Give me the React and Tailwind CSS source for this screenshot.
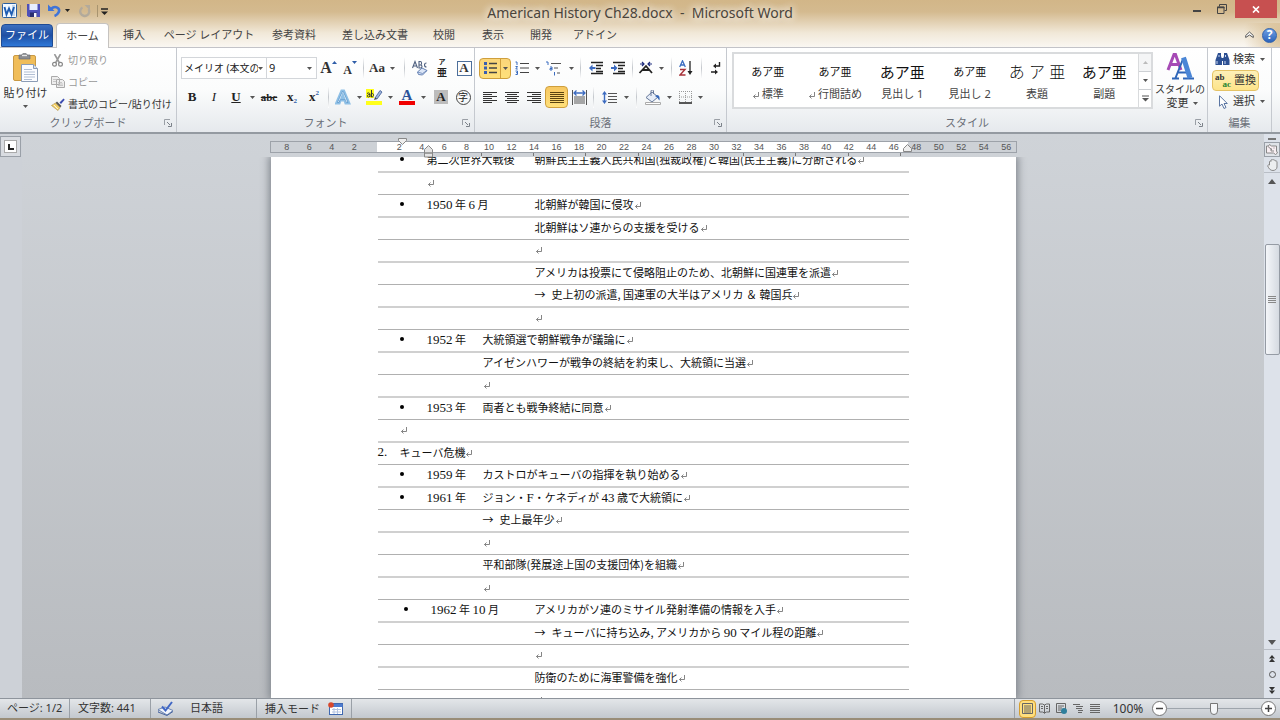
import React from 'react';
import clsx from 'clsx';

const tabs = [
  { name: '挿入', width: 'w-[50px]' },
  { name: 'ページ レイアウト', width: 'w-[100px]' },
  { name: '参考資料', width: 'w-[70px]' },
  { name: '差し込み文書', width: 'w-[92px]' },
  { name: '校閲', width: 'w-[46px]' },
  { name: '表示', width: 'w-[52px]' },
  { name: '開発', width: 'w-[44px]' },
  { name: 'アドイン', width: 'w-16' },
];

const styles = [
  { sample: 'あア亜', name: '標準', mark: true, size: 'text-[11px]' },
  { sample: 'あア亜', name: '行間詰め', mark: true, size: 'text-[11px]' },
  { sample: 'あア亜', name: '見出し 1', size: 'text-[15px]' },
  { sample: 'あア亜', name: '見出し 2', size: 'text-[11px]' },
  { sample: 'あ ア 亜', name: '表題', size: 'text-base font-light' },
  { sample: 'あア亜', name: '副題', size: 'text-[15px]' },
];

const rulerMarks = [8, 6, 4, 2, '', ...Array.from({ length: 28 }, (_, i) => (i + 1) * 2)];

// indent: where the body text starts ("label" = right after the bullet)
const lines = [
  { bullet: true, label: '第二次世界大戦後', indent: 'far', text: '朝鮮民主主義人民共和国(独裁政権)と韓国(民主主義)に分断される' },
  { indent: 'label' },
  { bullet: true, label: '1950 年 6 月', indent: 'far', text: '北朝鮮が韓国に侵攻' },
  { indent: 'far', text: '北朝鮮はソ連からの支援を受ける' },
  { indent: 'far' },
  { indent: 'far', text: 'アメリカは投票にて侵略阻止のため、北朝鮮に国連軍を派遣' },
  { indent: 'far', arrow: true, text: '史上初の派遣, 国連軍の大半はアメリカ ＆ 韓国兵' },
  { indent: 'far' },
  { bullet: true, label: '1952 年', indent: 'near', text: '大統領選で朝鮮戦争が議論に' },
  { indent: 'near', text: 'アイゼンハワーが戦争の終結を約束し、大統領に当選' },
  { indent: 'near' },
  { bullet: true, label: '1953 年', indent: 'near', text: '両者とも戦争終結に同意' },
  { indent: 'number' },
  { number: '2.', indent: 'number', text: 'キューバ危機' },
  { bullet: true, label: '1959 年', indent: 'near', text: 'カストロがキューバの指揮を執り始める' },
  { bullet: true, label: '1961 年', indent: 'near', text: 'ジョン・F・ケネディが 43 歳で大統領に' },
  { indent: 'near', arrow: true, text: '史上最年少' },
  { indent: 'near' },
  { indent: 'near', text: '平和部隊(発展途上国の支援団体)を組織' },
  { indent: 'near' },
  { bullet: true, wide: true, label: '1962 年 10 月', indent: 'far', text: 'アメリカがソ連のミサイル発射準備の情報を入手' },
  { indent: 'far', arrow: true, text: 'キューバに持ち込み, アメリカから 90 マイル程の距離' },
  { indent: 'far' },
  { indent: 'far', text: '防衛のために海軍警備を強化' },
  { indent: 'far' },
];

const indentWidth = {
  number: 'w-[22px]',
  label: 'w-[49px]',
  near: 'w-[105px]',
  far: 'w-[157px]',
};

const Svg = ({ w, h, children, className }) => (
  <svg width={w} height={h} viewBox={`0 0 ${w} ${h}`} fill="none" className={clsx('shrink-0', className)} aria-hidden="true">
    {children}
  </svg>
);

const Caret = ({ color = '#555' }) => (
  <Svg w={5} h={3}>
    <path d="M0 0h5L2.500 3z" fill={color} />
  </Svg>
);

const Tool = ({ label, className = 'w-[22px]', children }) => (
  <button type="button" aria-label={label} className={clsx('flex h-[22px] shrink-0 items-center justify-center', className)}>
    {children}
  </button>
);

const Drop = ({ className = 'w-2' }) => (
  <Tool label="その他のオプション" className={className}>
    <Caret />
  </Tool>
);

const Sep = ({ className = 'w-1.5' }) => (
  <span className={clsx('flex h-[22px] shrink-0 justify-center', className)}>
    <span className="w-px bg-[linear-gradient(#fff,#c3c7cc,#fff)]" />
  </span>
);

const Launcher = () => (
  <button type="button" aria-label="ダイアログを表示" className="absolute right-1 top-1">
    <Svg w={8} h={8}>
      <path d="M.5 6V.5H6" stroke="#9a9fa6" />
      <path d="M3 3l3 3M7.500 4v3.500H4" stroke="#7c828a" />
    </Svg>
  </button>
);

const Group = ({ title, className, launcher = true, children }) => (
  <section className={clsx('flex shrink-0 flex-col border-r border-[#c5c9cf]', className)}>
    <div className="h-[67px]">{children}</div>
    <div className="relative h-[17px] text-center text-[11px] leading-4 text-[#6a6f78]">
      {title}
      {launcher && <Launcher />}
    </div>
  </section>
);

const ReturnMark = ({ className }) => (
  <Svg w={7} h={8} className={className}>
    <path d="M6.500 0v4.500H1.500M3.500 2.500l-2 2 2 2" stroke="#777" strokeWidth=".9" />
  </Svg>
);

const TitleBar = () => (
  <div className="grid h-[23px] grid-cols-[1fr_auto_1fr]">
    <div className="flex items-start pt-[3px] pl-0.5">
      <Svg w={15} h={15}>
        <rect x=".5" y=".5" width="14" height="14" rx="1" fill="#f4f9ff" stroke="#2c5f9e" />
        <path d="M10 2h3v11h-3z" fill="#c6d9ee" />
        <path d="M2.500 4l2 7.500L7 5.500l2.500 6L12 4" stroke="#1f5db3" strokeWidth="1.900" />
      </Svg>
      <span className="ml-[3px] mt-0.5 h-3 w-px bg-[#a8946f]" />
      <button type="button" aria-label="上書き保存" className="ml-1.5 mt-px">
        <Svg w={13} h={13}>
          <path d="M0 0h13v13H1.500L0 11.500z" fill="#4d50b8" />
          <path d="M2.500 0h8v6h-8z" fill="#e8efff" />
          <path d="M3 8.500h7V13H3z" fill="#2b2f70" />
          <path d="M7 9h2.500v4H7z" fill="#f4f4ff" />
        </Svg>
      </button>
      <button type="button" aria-label="元に戻す" className="ml-2">
        <Svg w={13} h={14}>
          <path d="M3 6C7 2 13 5 10.500 9.500 9.500 11.500 8 12.500 6.500 13" stroke="#3f74d8" strokeWidth="2.600" />
          <path d="M0 1.500V8h6.500z" fill="#3f74d8" />
        </Svg>
      </button>
      <span className="mx-1 mt-1.5"><Caret color="#222" /></span>
      <button type="button" aria-label="やり直し" className="ml-[5px] mt-0.5">
        <Svg w={12} h={13}>
          <path d="M3.500 2.500A4.500 4.500 0 1 0 9.500 4" stroke="#b3aa9b" strokeWidth="2.400" />
          <path d="M5.500 0H11v5.500z" fill="#b3aa9b" />
        </Svg>
      </button>
      <span className="ml-1.5 mt-0.5 h-3 w-px bg-[#a8946f]" />
      <button type="button" aria-label="クイック アクセスのカスタマイズ" className="ml-[3px] mt-[5px]">
        <Svg w={7} h={7}>
          <path d="M0 1h7" stroke="#222" strokeWidth="1.500" />
          <path d="M0 3.500h7L3.500 7z" fill="#222" />
        </Svg>
      </button>
    </div>
    <h1 className="pt-[3px] text-sm text-[#4a443b] [text-shadow:0_0_8px_#fff,0_0_8px_#fff]">
      American History Ch28.docx&nbsp; -&nbsp; Microsoft Word
    </h1>
    <div className="flex items-start justify-end pr-[3px]">
      <button type="button" aria-label="最小化" className="mr-4 mt-2.5 h-0.5 w-2 bg-[#444]" />
      <button type="button" aria-label="元のサイズに戻す" className="mr-2 mt-1">
        <Svg w={10} h={10}>
          <path d="M2.500 2.500v-2h7v6h-2" stroke="#444" />
          <path d="M.5 3h6.500v6.500H.5z" stroke="#444" />
          <path d="M0 3.500h7.500" stroke="#444" strokeWidth="1.500" />
        </Svg>
      </button>
      <button type="button" aria-label="閉じる" className="flex h-[18px] w-[42px] items-center justify-center bg-[#c75050]">
        <Svg w={8} h={7}>
          <path d="M1 .5l6 6M7 .5l-6 6" stroke="#fff" strokeWidth="1.700" />
        </Svg>
      </button>
    </div>
  </div>
);

const TabBar = () => (
  <nav className="flex h-6 items-stretch pl-px text-[11px] text-[#444]">
    <button type="button" className="mt-px w-[52px] rounded-t-sm border border-[#1f4b94] bg-[linear-gradient(#3c6fc0,#1f4fa3_50%,#2f78d8)] text-white">
      ファイル
    </button>
    <button type="button" className="relative ml-[3px] -mb-px w-[53px] rounded-t-sm border border-b-0 border-[#c6c3c0] bg-white">
      ホーム
    </button>
    {tabs.map((tab) => (
      <button key={tab.name} type="button" className={clsx('shrink-0 whitespace-nowrap', tab.width)}>
        {tab.name}
      </button>
    ))}
    <div className="ml-auto flex items-center gap-2 bg-[radial-gradient(circle_at_100%_50%,#d8bf95,transparent_70%)] pr-[3px] pl-4">
      <button type="button" aria-label="リボンの最小化">
        <Svg w={9} h={8}>
          <path d="M.7 4.500l3.800-3.500 3.800 3.500v2L4.500 4 .7 6.500z" fill="#fff" stroke="#555" />
        </Svg>
      </button>
      <button type="button" aria-label="ヘルプ" className="flex size-[15px] items-center justify-center rounded-full border border-[#2f62ad] bg-[linear-gradient(#6fa0e4,#2c63bb)] text-[12px] leading-3 font-bold text-white">
        ?
      </button>
    </div>
  </nav>
);

const Clipboard = () => (
  <Group title="クリップボード" className="w-[177px]">
    <div className="flex">
      <button type="button" className="flex w-[51px] shrink-0 flex-col items-center pt-[5px] text-[11px] leading-4 text-[#333]">
        <Svg w={26} h={29}>
          <rect x=".5" y="2.500" width="22" height="25" rx="1.500" fill="#f0bd59" stroke="#c99a45" />
          <path d="M6 2h3c0-2.500 5-2.500 5 0h3v4H6z" fill="#8b8d91" stroke="#6c6e73" strokeWidth=".7" />
          <path d="M9 2.500h5" stroke="#e6e6e6" strokeWidth="1.300" />
          <path d="M8.500 11.500h12l4 4v13h-16z" fill="#fbfcff" stroke="#8b9cb5" />
          <path d="M20.500 11.500v4h4" fill="#dbe3ef" stroke="#8b9cb5" />
          <path d="M11 16.500h8M11 19h11M11 21.500h11M11 24h11M11 26.500h8" stroke="#b1bfd4" />
        </Svg>
        <span className="mt-[3px] whitespace-nowrap">貼り付け</span>
        <span className="mt-1"><Caret /></span>
      </button>
      <div className="flex flex-col pt-px text-[10px] whitespace-nowrap">
        <button type="button" className="flex h-[22px] items-center text-[#999]">
          <Svg w={13} h={13} className="mr-1">
            <path d="M3.500 0L8.500 9M9.500 0L4.500 9" stroke="#999" strokeWidth="1.600" />
            <circle cx="3.500" cy="10.200" r="1.900" stroke="#888" strokeWidth="1.200" />
            <circle cx="9.500" cy="10.200" r="1.900" stroke="#888" strokeWidth="1.200" />
          </Svg>
          切り取り
        </button>
        <button type="button" className="flex h-[22px] items-center text-[#999]">
          <Svg w={14} h={12} className="mr-[3px]">
            <path d="M.5.5h6l2 2v6h-8zM5.500 3.500h6l2 2v6h-8z" fill="#eee" stroke="#aaa" />
            <path d="M7 6.500h4M7 8h5M7 9.500h5M2 3.500h3M2 5.500h3" stroke="#bbb" strokeWidth=".8" />
          </Svg>
          コピー
        </button>
        <button type="button" className="flex h-[22px] items-center text-[#333]">
          <Svg w={14} h={13} className="mr-[3px]">
            <path d="M8.500 4.500l4-4 1.200 1.200-3.700 4.300z" fill="#3b4bb0" />
            <path d="M6 3.500l4.500 4.500-1.500 1.500L4.500 5z" fill="#555" />
            <path d="M4.500 5L9 9.500l-2 3L.500 7.500z" fill="#f2cf62" stroke="#a98a3a" strokeWidth=".6" />
            <path d="M2.500 6.700l4.500 4.500" stroke="#fff" strokeWidth=".9" />
          </Svg>
          書式のコピー/貼り付け
        </button>
      </div>
    </div>
  </Group>
);

const serif = "font-['Liberation_Serif',serif]";

const FontGroup = () => (
  <Group title="フォント" className="w-[298px]">
    <div className="flex flex-col gap-[7px] pt-[9px] pl-1">
      <div className="flex items-center">
        <label className="relative flex h-[22px] w-[86px] items-center border border-[#d3d6da] bg-white">
          <select aria-label="フォント" className="h-5 w-[76px] appearance-none overflow-hidden pl-0.5 text-[10px] leading-5 text-[#222]">
            <option>メイリオ (本文の</option>
          </select>
          <Caret />
        </label>
        <label className="-ml-px flex h-[22px] w-[51px] items-center border border-[#d3d6da] bg-white">
          <select aria-label="フォント サイズ" className="h-5 w-10 appearance-none pl-0.5 text-[11px] leading-5 text-[#222]">
            <option>9</option>
          </select>
          <Caret />
        </label>
        <Tool label="フォントの拡大" className="w-[23px]">
          <span className={clsx(serif, 'text-[16px] leading-5 font-bold text-[#333]')}>A</span>
          <Svg w={5} h={3} className="mb-3"><path d="M0 3h5L2.500 0z" fill="#2e5da8" /></Svg>
        </Tool>
        <Tool label="フォントの縮小" className="w-5">
          <span className={clsx(serif, 'mt-1 text-[12px] leading-4 font-bold text-[#333]')}>A</span>
          <Svg w={5} h={3} className="mb-3"><path d="M0 0h5L2.500 3z" fill="#2e5da8" /></Svg>
        </Tool>
        <Sep />
        <Tool label="文字種の変換" className="w-[22px]">
          <span className={clsx(serif, 'text-[13px] font-bold text-[#333]')}>Aa</span>
        </Tool>
        <Drop />
        <Sep className="w-4" />
        <Tool label="書式のクリア" className="w-4">
          <Svg w={16} h={16}>
            <path d="M.5 8L3 1.500 5.500 8M1.500 6h3M7 1.500V8h1.500c2 0 2-3 0-3H7h1.300c1.700 0 1.700-3.500 0-3.500zM14.500 3a2 2 0 1 0 0 4" stroke="#4f6080" strokeWidth="1.100" />
            <path d="M5.500 12l4.500-4 5 2.500-4.500 4.500-4-.5z" fill="#dce6f7" stroke="#6582b4" />
            <path d="M5.500 12l5 1.500L15 10.500" stroke="#6582b4" strokeWidth=".8" />
          </Svg>
        </Tool>
        <Tool label="ルビ" className="w-7 flex-col text-[#222]">
          <span className="text-[7px] leading-[9px] font-bold">ア</span>
          <span className="text-[10px] leading-[13px] font-bold">亜</span>
        </Tool>
        <Tool label="囲み線" className="w-4">
          <span className={clsx(serif, 'flex size-[15px] items-center justify-center border border-[#4d6f9b] text-[13px] leading-3 font-bold text-[#333]')}>A</span>
        </Tool>
      </div>
      <div className={clsx(serif, 'flex items-center text-[13px] text-[#222]')}>
        <Tool label="太字"><b>B</b></Tool>
        <Tool label="斜体"><i>I</i></Tool>
        <Tool label="下線"><b className="font-bold underline">U</b></Tool>
        <Drop className="w-2.5" />
        <Tool label="取り消し線" className="w-6"><s className="text-[11px] font-bold">abc</s></Tool>
        <Tool label="下付き"><b>x</b><b className="mt-2 text-[7px] text-[#2e5da8]">2</b></Tool>
        <Tool label="上付き"><b>x</b><b className="mb-2 text-[7px] text-[#2e5da8]">2</b></Tool>
        <Sep />
        <Tool label="文字の効果" className="w-6">
          <Svg w={16} h={16}>
            <path d="M1 14.500L6.500 1.500h2.500L14.500 14.500h-4L9.500 11.500h-4L4.500 14.500zM6.500 9h2.500L7.800 5.500z" fill="#fff" stroke="#8fc0e6" strokeWidth="2" />
            <path d="M2.500 13.500L7.300 2.500h1L13 13.500h-1.500L10.300 10.500h-5L4 13.500z" stroke="#4f8fc8" strokeWidth=".7" />
          </Svg>
        </Tool>
        <Drop />
        <Tool label="蛍光ペンの色">
          <Svg w={17} h={16}>
            <path d="M0 0h8v9H0zM0 12h16v4H0z" fill="#ffff1a" />
            <path d="M1 4.500c2-1.500 3 0 3 1V8M4 5.500c-3-.3-3.500 2.500-1.500 2.500L4 7M5.500 1v7M5.500 5c2-2 3.500 3 0 3" stroke="#333" />
            <path d="M9 9l5-7.500 2 1.500-5 7z" fill="#9fb6dc" stroke="#3d5b96" strokeWidth=".8" />
            <path d="M8 11l1-2.500 2 1.500z" fill="#444" />
          </Svg>
        </Tool>
        <Drop className="w-2.5" />
        <Tool label="フォントの色" className="w-6 flex-col">
          <b className="text-[15px] leading-3 text-[#2a5299]">A</b>
          <span className="h-1 w-4 bg-[#f00000]" />
        </Tool>
        <Drop />
        <Tool label="文字の網かけ" className="w-7">
          <b className="flex size-[14px] items-center justify-center bg-[#bcbcbc]">A</b>
        </Tool>
        <Tool label="囲い文字" className="w-4">
          <span className="flex size-[15px] items-center justify-center rounded-full border border-[#444] font-['Noto_Sans_CJK_JP',sans-serif] text-[10px] leading-3">字</span>
        </Tool>
      </div>
    </div>
  </Group>
);

const AlignIcon = ({ d, color = '#333' }) => (
  <Svg w={14} h={13}>
    <path d={d} stroke={color} />
  </Svg>
);

const IndentIcon = ({ flip }) => (
  <Svg w={15} h={14}>
    <path d="M2 1.500h12M7 4.500h7M7 7.500h5M7 10.500h7M2 12.500h12" stroke="#222" strokeWidth="1.300" />
    <path d={flip ? 'M0 6h3V3.500L6.500 7 3 10.500V8H0z' : 'M6.500 6h-3V3.500L0 7l3.500 3.500V8h3z'} fill="#3c6bc0" />
  </Svg>
);

const Paragraph = () => (
  <Group title="段落" className="w-[252px]">
    <div className="flex flex-col gap-[7px] pt-[9px] pl-1">
      <div className="flex items-center">
        <div className="flex h-[21px] w-8 rounded-sm border border-[#cf9f3c] bg-[linear-gradient(#fbd67a,#ffe07a)]">
          <button type="button" aria-label="箇条書き" className="flex w-5 items-center justify-center">
            <Svg w={13} h={12}>
              <path d="M5 1.500h8M5 6h8M5 10.500h8" stroke="#444" strokeWidth="1.300" />
              <path d="M0 0h3v3H0zM0 4.500h3v3H0zM0 9h3v3H0z" fill="#3a5fb0" />
            </Svg>
          </button>
          <button type="button" aria-label="箇条書きのオプション" className="flex flex-1 items-center justify-center border-l border-[#cf9f3c]">
            <Caret />
          </button>
        </div>
        <Tool label="段落番号" className="w-[22px]">
          <Svg w={14} h={14}>
            <path d="M5 2.500h9M5 7h9M5 11.500h9" stroke="#444" strokeWidth="1.200" />
            <path d="M.5 1H2v3M.5 5.500H2.500L.8 8h2M.5 10h2v3.500h-2M1 11.700h1.500" stroke="#3a6cc0" />
          </Svg>
        </Tool>
        <Drop />
        <Tool label="アウトライン" className="w-[26px]">
          <Svg w={16} h={15}>
            <path d="M5 2.500h10M8 7h4M11 12h3" stroke="#555" strokeWidth="1.200" />
            <path d="M0 1h2v3M4 6h2v3H4V7.500h2M8.500 11v3.500" stroke="#3a6cc0" />
          </Svg>
        </Tool>
        <Drop />
        <Sep className="w-2.5" />
        <Tool label="インデントを減らす"><IndentIcon /></Tool>
        <Tool label="インデントを増やす"><IndentIcon flip /></Tool>
        <Sep />
        <Tool label="拡張書式" className="w-[22px]">
          <Svg w={16} h={14}>
            <path d="M1.500 12L8 5l6 7M4.500 9h7" stroke="#222" strokeWidth="1.800" />
            <path d="M2 3h3.500M4 1l2 2-2 2M14 3h-3.500M12 1l-2 2 2 2" stroke="#1c2a7c" strokeWidth="1.200" />
          </Svg>
        </Tool>
        <Drop />
        <Sep className="w-3" />
        <Tool label="並べ替え" className="w-[18px]">
          <Svg w={14} h={16}>
            <path d="M.7 7L3.500.8 6.300 7M1.800 5h3.500" stroke="#3a6cc0" strokeWidth="1.300" />
            <path d="M1 9.500h5L1 15h5.500" stroke="#a8323a" strokeWidth="1.400" />
            <path d="M11 1v12" stroke="#222" strokeWidth="1.300" />
            <path d="M8.500 11h5L11 15z" fill="#222" />
          </Svg>
        </Tool>
        <Sep className="w-3" />
        <Tool label="編集記号の表示" className="w-[18px]">
          <Svg w={10} h={13}>
            <path d="M8.500 0v4H4M0 10h5" stroke="#222" strokeWidth="1.400" />
            <path d="M5 1.500v5L2 4zM4 7.500v5l3-2.500z" fill="#222" />
          </Svg>
        </Tool>
      </div>
      <div className="flex items-center">
        <Tool label="左揃え"><AlignIcon d="M0 1.500h14M0 3.500h9M0 5.500h14M0 7.500h9M0 9.500h14M0 11.500h9" /></Tool>
        <Tool label="中央揃え"><AlignIcon d="M0 1.500h14M2 3.500h10M0 5.500h14M2 7.500h10M0 9.500h14M2 11.500h10" /></Tool>
        <Tool label="右揃え"><AlignIcon d="M0 1.500h14M5 3.500h9M0 5.500h14M5 7.500h9M0 9.500h14M5 11.500h9" /></Tool>
        <Tool label="両端揃え" className="w-[23px] rounded-sm border border-[#cf9f3c] bg-[linear-gradient(#f7c862,#ffe07a)]">
          <AlignIcon d="M0 1.500h14M0 3.500h14M0 5.500h14M0 7.500h14M0 9.500h14M0 11.500h14" color="#5a4410" />
        </Tool>
        <Tool label="均等割り付け">
          <Svg w={15} h={15}>
            <path d="M.5 0v15M14.500 0v15M2 7h11M2 9h11M2 11h11M2 13h11" stroke="#555" />
            <path d="M2 3h11M4.500.5L2 3l2.500 2.500M10.500.5L13 3l-2.500 2.500" stroke="#3c6bc0" strokeWidth="1.300" />
          </Svg>
        </Tool>
        <Sep />
        <Tool label="行間" className="w-[26px]">
          <Svg w={15} h={15}>
            <path d="M6 3.500h9M6 6.500h9M6 9.500h9M6 12.500h9" stroke="#555" strokeWidth="1.200" />
            <path d="M0 4.500L2.500 1 5 4.500H3.200v6H5L2.500 14 0 10.500h1.800v-6z" fill="#3c6bc0" />
          </Svg>
        </Tool>
        <Drop />
        <Sep className="w-3" />
        <Tool label="塗りつぶし">
          <Svg w={16} h={15}>
            <path d="M1 7.500L7 2l6 5-6 5z" fill="#e6edf8" stroke="#66789a" />
            <path d="M6 6V1c0-1.500 2.500-1.500 2.500 0v3" stroke="#66789a" />
            <path d="M12 5c2.500 0 3 3 2.500 5.500C13 9 13 7.500 10 6z" fill="#3667b8" />
            <path d="M.5 12.500h15v2H.5z" fill="#fff" stroke="#aaa" />
          </Svg>
        </Tool>
        <Drop className="w-2.5" />
        <Tool label="罫線">
          <Svg w={13} h={13}>
            <path d="M.5 0v11M12.500 0v11M6.500 0v11M0 .5h13M0 6h13" stroke="#999" strokeDasharray="1 1" />
            <path d="M0 12h13" stroke="#222" strokeWidth="1.500" />
          </Svg>
        </Tool>
        <Drop />
      </div>
    </div>
  </Group>
);

const Styles = () => (
  <Group title="スタイル" className="min-w-0 flex-1">
    <div className="flex">
      <div className="mt-1 ml-[5px] flex h-[57px] min-w-0 flex-1 border-2 border-[#d9dbdd] bg-white">
        <div className="grid min-w-0 flex-1 grid-cols-6">
          {styles.map((style) => (
            <button key={style.name} type="button" className="flex min-w-0 flex-col items-center overflow-hidden">
              <span className={clsx('mt-1 h-7 leading-7 whitespace-nowrap text-[#111]', style.size)}>{style.sample}</span>
              <span className="flex items-center text-[11px] leading-4 whitespace-nowrap text-[#444]">
                {style.mark && <ReturnMark className="mt-1 mr-[3px]" />}
                {style.name}
              </span>
            </button>
          ))}
        </div>
        <div className="flex w-[13px] flex-col divide-y divide-[#cdd0d4] border-l border-[#d9dbdd] bg-[#f4f5f6]">
          <button type="button" aria-label="前の行" className="flex flex-1 items-center justify-center">
            <Svg w={5} h={3}><path d="M0 3h5L2.500 0z" fill="#bbb" /></Svg>
          </button>
          <button type="button" aria-label="次の行" className="flex flex-1 items-center justify-center bg-white"><Caret /></button>
          <button type="button" aria-label="スタイル一覧" className="flex flex-1 items-center justify-center bg-white">
            <Svg w={7} h={7}>
              <path d="M0 1h7" stroke="#555" />
              <path d="M0 3h7L3.500 6.500z" fill="#555" />
            </Svg>
          </button>
        </div>
      </div>
      <button type="button" className="flex w-[54px] shrink-0 flex-col items-center pt-1 text-[10px] leading-[14px] text-[#333]">
        <Svg w={28} h={28}>
          <path d="M2 18L8 2.500h1.500L15 18M4.500 12.500h8" stroke="#a64ab5" strokeWidth="3" />
          <path d="M6 26.500h7M17 26.500h11M9.500 26L17 7M12 20.500h10" stroke="#2f66b8" strokeWidth="2" />
          <path d="M17.500 5.500l6.500 20.500" stroke="#4a86d6" strokeWidth="5" />
        </Svg>
        <span className="mt-0.5 whitespace-nowrap">スタイルの</span>
        <span className="flex items-center gap-1 pl-1 text-[11px]">変更 <Caret /></span>
      </button>
    </div>
  </Group>
);

const Editing = () => (
  <Group title="編集" className="w-16" launcher={false}>
    <div className="flex flex-col pt-px pl-1 text-[11px] text-[#333]">
      <button type="button" className="flex h-[21px] items-center pl-[3px]">
        <Svg w={15} h={13} className="mr-[3px]">
          <path d="M3 0h3v3l1 3v6H.5V7zM9 0h3l2.500 7v5H8V6l1-3zM6 5h3v3H6z" fill="#2c4f92" />
          <path d="M2 8v3M10 8v3M4 2v2M10.500 2v2" stroke="#c7d6f0" />
        </Svg>
        検索
        <span className="ml-[5px]"><Caret /></span>
      </button>
      <button type="button" className="flex h-[21px] w-[47px] items-center rounded-sm border border-[#e5c365] bg-[linear-gradient(#fdf0b8,#fde48a)] pl-0.5">
        <span className={clsx(serif, 'mr-[3px] flex w-4 flex-col text-[9px] leading-[7px] font-bold')}>
          <span className="text-left">ab</span>
          <span className="text-right text-[#23852f]">ac</span>
        </span>
        置換
      </button>
      <button type="button" className="flex h-[21px] items-center pl-[7px]">
        <Svg w={9} h={14} className="mr-[5px]">
          <path d="M.5.7v10.500L3 9l2 4.500 2-1-2-4h3.300z" fill="#fff" stroke="#5b76a3" />
        </Svg>
        選択
        <span className="ml-[5px]"><Caret /></span>
      </button>
    </div>
  </Group>
);

const Ruler = () => (
  <div className="relative mx-auto h-[23px] w-[747px] max-w-full pt-[7px]">
    <div className="h-3 border border-[#9da2a9] bg-[linear-gradient(90deg,#cdd1d6_106px,#fff_106px,#fff_637px,#cdd1d6_637px)]">
      <div className="-mr-0.5 ml-[5px] grid grid-cols-[repeat(33,minmax(0,1fr))] text-center font-['Liberation_Sans',sans-serif] text-[9px] leading-[10px] text-[#555]">
        {rulerMarks.map((n, i) => (
          <span key={i}>{n}</span>
        ))}
      </div>
    </div>
    <div className="ml-[211px] grid h-[3px] w-[472px] grid-cols-9">
      {Array.from({ length: 9 }, (_, i) => (
        <span key={i} className="border-l border-[#777]" />
      ))}
    </div>
    <Svg w={9} h={7} className="absolute top-1 left-[128px]">
      <path d="M.5.5h8v2l-4 4-4-4z" fill="#eee" stroke="#888" />
    </Svg>
    <Svg w={9} h={13} className="absolute top-[11px] left-[154px]">
      <path d="M.5 8V4.500l4-4 4 4V8zM.5 8h8v4h-8z" fill="#e4e4e4" stroke="#888" />
    </Svg>
    <Svg w={9} h={8} className="absolute top-2.5 left-[633px]">
      <path d="M.5 7.500V4.500l4-4 4 4v3z" fill="#eee" stroke="#888" />
    </Svg>
  </div>
);

// digits and latin letters are set in the serif face, a bit larger than the kana
const Mixed = ({ text }) =>
  text.split(/([0-9A-Z.]+)/).map((part, i) =>
    i % 2 ? <span key={i} className="font-['Liberation_Serif',serif] text-[13px]">{part}</span> : part
  );

const Line = ({ line, thick }) => (
  <div
    className={clsx(
      'flex items-center pb-[3px] whitespace-nowrap',
      thick ? 'h-[23px] border-b-2 border-[#d0d0d0]' : 'h-[22px] border-b border-[#b0b0b0]'
    )}
  >
    <div className={clsx('flex shrink-0 items-center', indentWidth[line.indent])}>
      {line.number && <Mixed text={line.number} />}
      {line.bullet && (
        <span className={clsx('flex shrink-0 justify-center', line.wide ? 'w-[53px] pl-1' : 'w-[49px]')}>
          <span className="size-1 rounded-full bg-black" />
        </span>
      )}
      {line.label && <span><Mixed text={line.label} /></span>}
    </div>
    {line.arrow && <span className="w-[17px]">→</span>}
    {line.text && <span><Mixed text={line.text} /></span>}
    <ReturnMark className="mt-1" />
  </div>
);

const Page = () => (
  <article className="h-full overflow-hidden bg-white px-[107px] font-['Noto_Sans_CJK_JP',sans-serif] text-[11px] leading-5 text-[#111] shadow-[0_0_8px_2px_#80868d]">
    <div className="-mt-[7px]">
      {lines.map((line, i) => (
        <Line key={i} line={line} thick={i % 2 === 0} />
      ))}
    </div>
  </article>
);

const ScrollBar = () => (
  <div className="flex w-4 shrink-0 flex-col items-center bg-[#dde2ea]">
    <span className="mt-1 h-0.5 w-2 bg-[#777]" />
    <button type="button" aria-label="ルーラー" className="mt-0.5 flex h-[15px] w-4 items-center justify-center border border-[#9aa0a8] bg-[#dfe3e8]">
      <Svg w={12} h={11}>
        <path d="M.5 2h2l1-1.500 2 1.500h5v5l1 2-2 1.500-2-1.500h-7z" fill="#f8eef2" stroke="#888" />
        <path d="M2 2.500l4 3.500M5 4v3h3M8 4.500v-1" stroke="#888" />
      </Svg>
    </button>
    <button type="button" aria-label="手のひらツール" className="flex h-4 w-4 items-center justify-center border-b border-[#b9bec6]">
      <Svg w={11} h={12}>
        <path d="M2.500 6V2.500c1-1 1.500 0 1.500 0V1c1-1 2 0 2 0 1-.8 2 0 2 1 1-.5 2 0 2 1v5c0 2-2 3.500-4 3.500C3 11.500 2 9.500.7 7c0-1 1-1.500 1.800-1z" fill="#eceef0" stroke="#888" />
      </Svg>
    </button>
    <button type="button" aria-label="上へスクロール" className="mt-1.5">
      <Svg w={8} h={5}><path d="M0 5h8L4 0z" fill="#555" /></Svg>
    </button>
    <div className="mt-[60px] flex h-[111px] w-[15px] flex-col items-center justify-center gap-px rounded-xs border border-[#959ba4] bg-[linear-gradient(90deg,#f4f6f9,#d5dae1)]">
      <span className="h-px w-2 bg-[#888]" />
      <span className="h-px w-2 bg-[#888]" />
      <span className="h-px w-2 bg-[#888]" />
      <span className="h-px w-2 bg-[#888]" />
    </div>
    <div className="mt-auto flex flex-col items-center">
      <button type="button" aria-label="下へスクロール" className="mb-1">
        <Svg w={8} h={5}><path d="M0 0h8L4 5z" fill="#555" /></Svg>
      </button>
      <span className="h-px w-4 bg-[#b9bec6]" />
      <button type="button" aria-label="前のページ" className="flex h-4 items-center">
        <Svg w={6} h={7}><path d="M0 3.500h6L3 0zM0 7h6L3 3.500z" fill="#333" /></Svg>
      </button>
      <button type="button" aria-label="ジャンプ先の選択" className="flex h-4 items-center">
        <span className="size-[7px] rounded-full border border-[#555]" />
      </button>
      <button type="button" aria-label="次のページ" className="flex h-4 items-center">
        <Svg w={6} h={7}><path d="M0 0h6L3 3.500zM0 3.500h6L3 7z" fill="#333" /></Svg>
      </button>
    </div>
  </div>
);

const ViewIcon = ({ d }) => (
  <Svg w={11} h={11}>
    <path d={d} stroke="#666" />
  </Svg>
);

const StatusBar = () => (
  <footer className="flex h-5 shrink-0 items-stretch border-t border-[#8e949c] bg-[linear-gradient(#e3e6e9,#c3c8ce)] text-[11px] leading-[18px] whitespace-nowrap text-[#333]">
    <span className="w-[70px] border-r border-[#9aa0a7] pl-[7px]">ページ: 1/2</span>
    <span className="w-[81px] border-r border-[#9aa0a7] pl-2">文字数: 441</span>
    <button type="button" aria-label="文章校正" className="w-8 pl-[7px]">
      <Svg w={16} h={15}>
        <path d="M0 8.500L7 6l8 3.500-6 4.500z" fill="#f0f4fb" stroke="#6d86b5" />
        <path d="M0 9v2l9 3.500 6-4" stroke="#4a66a0" />
        <path d="M4 5.500l3.500 4L14 1" stroke="#3f66c4" strokeWidth="2" />
      </Svg>
    </button>
    <span className="w-[74px] border-r border-[#9aa0a7] pl-[7px]">日本語</span>
    <span className="flex w-[95px] items-center justify-between border-r border-[#9aa0a7] pr-2 pl-2">
      挿入モード
      <Svg w={15} h={13}>
        <rect x="1.500" y="1.500" width="13" height="11" fill="#fff" stroke="#3f68b0" />
        <path d="M2 2h12.500v3H2z" fill="#4d7bd0" />
        <path d="M4 7.500h9M4 10h9M6 6v6M9.500 6v6" stroke="#b4c5e2" />
        <circle cx="3" cy="3" r="2.800" fill="#d8472b" />
      </Svg>
    </span>
    <div className="ml-auto flex items-center border-l border-[#9aa0a7] pl-1">
      <button type="button" aria-label="印刷レイアウト" className="flex h-[18px] w-[17px] items-center justify-center rounded-sm border border-[#d59d2e] bg-[#ffdf7e]">
        <ViewIcon d="M.5.5h10v10H.5zM2 3h7M2 5h7M2 7h7M2 9h7" />
      </button>
      <button type="button" aria-label="全画面閲覧" className="flex w-[17px] justify-center">
        <ViewIcon d="M5.500 2v8.500M.5 1h3l2 1 2-1h3v8h-3l-2 1-2-1h-3zM2 3.500h2M2 5.500h2M7 3.500h2M7 5.500h2" />
      </button>
      <button type="button" aria-label="Web レイアウト" className="flex w-[17px] justify-center">
        <Svg w={11} h={11}>
          <path d="M.5.5h9v9H.5zM2 3h6M2 5h4M2 7h3" stroke="#666" />
          <circle cx="8" cy="8" r="3" fill="#2f7f9c" />
        </Svg>
      </button>
      <button type="button" aria-label="アウトライン表示" className="flex w-[17px] justify-center">
        <ViewIcon d="M0 1.500h7M3 3.500h7M3 5.500h6M5 7.500h5M5 9.500h4" />
      </button>
      <button type="button" aria-label="下書き" className="flex w-[17px] justify-center">
        <ViewIcon d="M0 1.500h10M0 3.500h10M0 5.500h10M0 7.500h10M0 9.500h10" />
      </button>
      <button type="button" className="w-12 text-center text-[12px]">100%</button>
      <button type="button" aria-label="縮小" className="flex size-[15px] items-center justify-center rounded-full border border-[#777] bg-white">
        <Svg w={7} h={7}><path d="M0 3.500h7" stroke="#444" strokeWidth="1.500" /></Svg>
      </button>
      <input
        type="range"
        aria-label="ズーム"
        min="0"
        max="200"
        defaultValue="100"
        className="h-4 w-[94px] appearance-none bg-[linear-gradient(#9ea5ac,#9ea5ac)] bg-[length:100%_1px] bg-center bg-no-repeat [&::-webkit-slider-thumb]:h-3 [&::-webkit-slider-thumb]:w-2 [&::-webkit-slider-thumb]:appearance-none [&::-webkit-slider-thumb]:rounded-b-sm [&::-webkit-slider-thumb]:border [&::-webkit-slider-thumb]:border-[#777] [&::-webkit-slider-thumb]:bg-[#f4f6f8]"
      />
      <button type="button" aria-label="拡大" className="mr-1 flex size-[15px] items-center justify-center rounded-full border border-[#777] bg-white">
        <Svg w={7} h={7}><path d="M0 3.500h7M3.500 0v7" stroke="#444" strokeWidth="1.500" /></Svg>
      </button>
    </div>
  </footer>
);

export const App = () => (
  <div className="flex h-screen flex-col overflow-hidden font-['Noto_Sans','Noto_Sans_CJK_JP',sans-serif]">
    <header className="shrink-0 bg-[linear-gradient(#d2b688,#d4ba8f_25%,#f1e8d8_70%,#faf7f2)]">
      <TitleBar />
      <TabBar />
    </header>
    <div className="flex h-[87px] shrink-0 border-t border-b-2 border-t-[#c3c3c8] border-b-[#949aa1] bg-[linear-gradient(#fff,#fbfcfc_50%,#e6e9ed)]">
      <Clipboard />
      <FontGroup />
      <Paragraph />
      <Styles />
      <Editing />
      <div className="w-2" />
    </div>
    <main className="flex min-h-0 flex-1 bg-[linear-gradient(#cfd3d8,#b8bbbf)]">
      <div className="w-[22px] shrink-0 bg-[#cdd1d7] pt-0.5">
        <button type="button" aria-label="タブの種類" className="flex size-[21px] items-center justify-center border border-[#9aa0a8] bg-[#d9dce1]">
          <span className="flex size-[13px] items-center justify-center border border-[#aaa] bg-white">
            <Svg w={6} h={6}><path d="M1 0v5h5" stroke="#222" strokeWidth="2" /></Svg>
          </span>
        </button>
      </div>
      <div className="flex min-w-0 flex-1 flex-col">
        <Ruler />
        <div className="min-h-0 flex-1 overflow-hidden">
          <div className="mx-auto h-full w-[745px] max-w-full">
            <Page />
          </div>
        </div>
      </div>
      <ScrollBar />
    </main>
    <StatusBar />
    <div className="h-0.5 shrink-0 bg-[#998d78]" />
  </div>
);

export default App;
